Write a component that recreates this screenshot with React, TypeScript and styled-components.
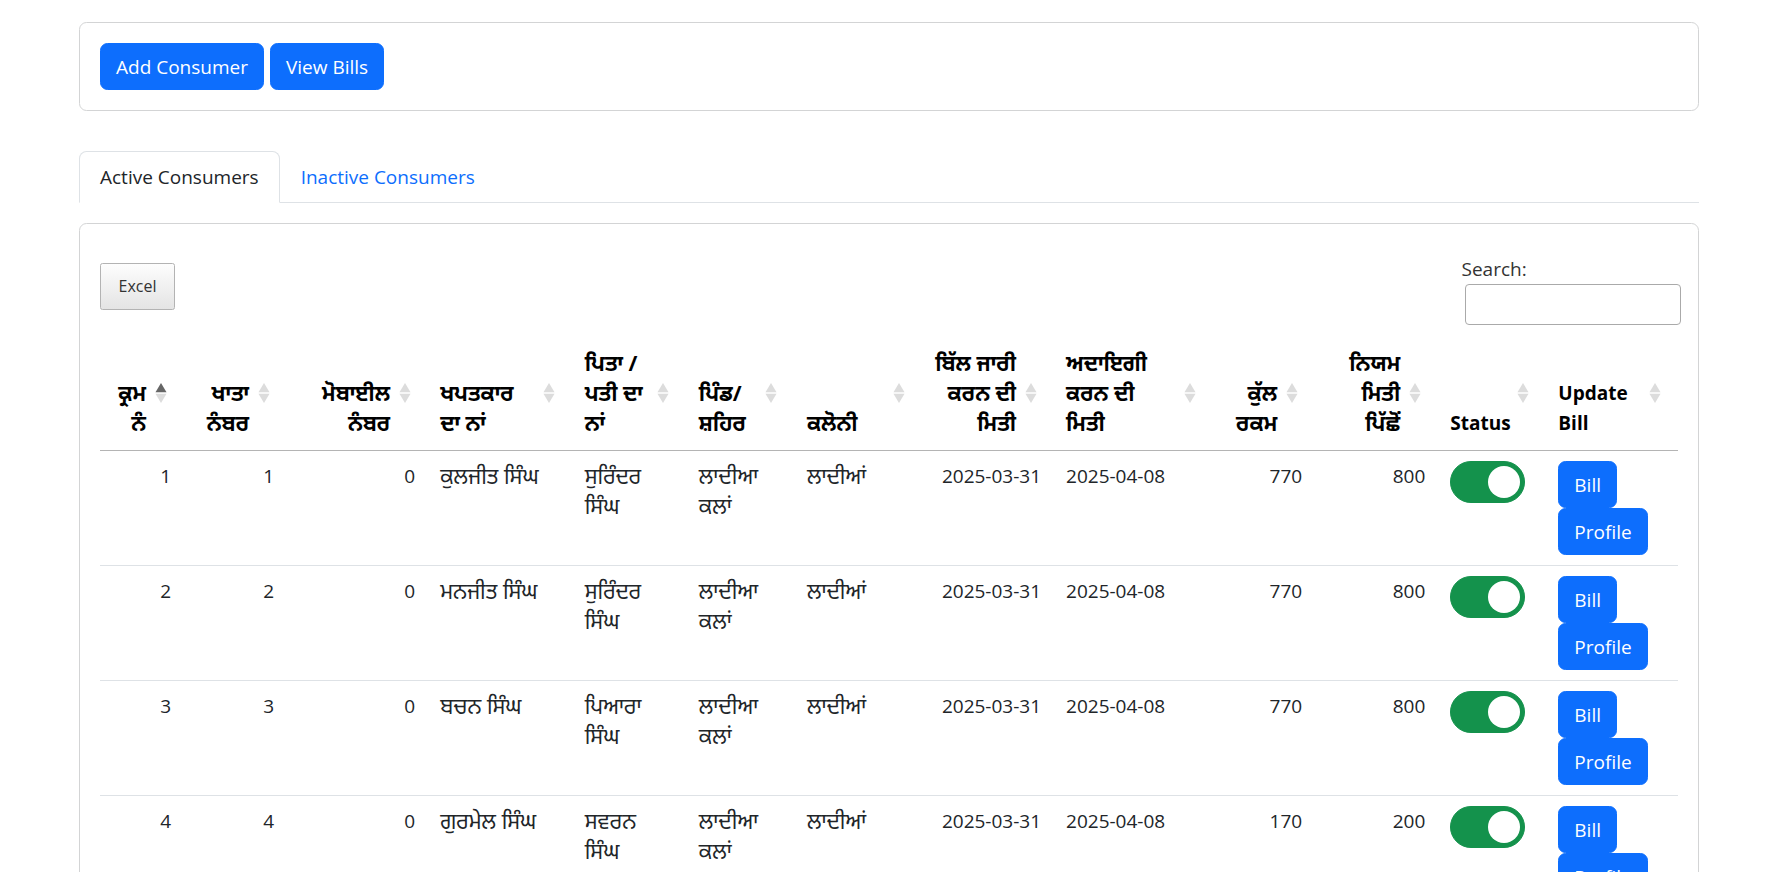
import React from 'react';
import styled, { createGlobalStyle, css } from 'styled-components';

const GlobalStyle = createGlobalStyle`
  html, body { margin: 0; padding: 0; background: #fff; overflow: hidden; }
  body {
    font-family: "Open Sans", "Noto Sans Gurmukhi", "Raavi", "Lohit Gurmukhi", "Noto Sans", sans-serif;
    font-size: 19px;
    line-height: 30px;
    color: #212529;
  }
  *, *::before, *::after { box-sizing: border-box; }
`;

const Page = styled.div`
  width: 1620px;
  margin-left: 79px;
  padding-top: 22px;
`;

const Card = styled.section`
  border: 1px solid #d3d4d5;
  border-radius: 7.5px;
  background: #fff;
`;

const CardBody = styled.div`
  padding: 20px;
`;

const Toolbar = styled.div`
  display: flex;
  gap: 6px;
`;

const PrimaryButton = styled.button`
  font-family: inherit;
  font-size: 19px;
  line-height: 30px;
  color: #fff;
  background: #0d6efd;
  border: 1px solid #0d6efd;
  border-radius: 7.5px;
  padding: 7.5px 15px;
  cursor: pointer;
  white-space: nowrap;
`;

const TabNav = styled.nav`
  display: flex;
  margin-top: 40px;
  border-bottom: 1px solid #dee2e6;
`;

const Tab = styled.button<{ $active?: boolean }>`
  font-family: inherit;
  font-size: 19px;
  line-height: 30px;
  padding: 10px 20px;
  margin-bottom: -1px;
  background: transparent;
  border: 1px solid transparent;
  border-top-left-radius: 7.5px;
  border-top-right-radius: 7.5px;
  color: #0d6efd;
  cursor: pointer;
  ${(p) =>
    p.$active &&
    css`
      color: #212529;
      background: #fff;
      border-color: #dee2e6 #dee2e6 #fff;
    `}
`;

const TableCard = styled(Card)`
  margin-top: 20px;
`;

const TopRow = styled.div`
  display: flex;
  justify-content: space-between;
  align-items: flex-end;
  padding-top: 10px;
`;

const ExcelButton = styled.button`
  font-family: "Open Sans", sans-serif;
  font-size: 16px;
  line-height: 27px;
  color: #333;
  padding: 9px 17.5px;
  margin-bottom: 15px;
  border: 1px solid #b3b3b3;
  border-radius: 2.5px;
  background: linear-gradient(to bottom, #fdfdfd 0%, #e4e4e4 100%);
  cursor: pointer;
`;

const SearchBlock = styled.label`
  display: flex;
  flex-direction: column;
  align-items: flex-start;
  margin-right: -3px;
  color: #333;
  font-size: 19px;
  line-height: 30px;
`;

const SearchInput = styled.input`
  width: 216px;
  height: 41px;
  margin-left: 3.5px;
  border: 1px solid #aaa;
  border-radius: 4px;
  padding: 6px;
  font: inherit;
  background: #fff;
`;

const Table = styled.table`
  width: 100%;
  margin-top: 10px;
  table-layout: fixed;
  border-collapse: separate;
  border-spacing: 0;
`;

type Align = 'left' | 'right';
type Lang = 'pa' | 'en';

const HeadCell = styled.th<{ $align: Align; $lang: Lang }>`
  position: relative;
  text-align: ${(p) => p.$align};
  vertical-align: bottom;
  padding: 12.5px 37.5px 12.5px 12.5px;
  font-weight: 700;
  font-size: ${(p) => (p.$lang === 'pa' ? '21.5px' : '19px')};
  line-height: 30px;
  color: #000;
  white-space: pre-line;
  border-bottom: 1px solid #b4b4b4;
`;

const SortMark = styled.svg`
  position: absolute;
  right: 17px;
  top: 50%;
  transform: translateY(-50%);
  width: 12px;
  height: 22px;
`;

const BodyCell = styled.td<{ $align: Align; $lang: Lang }>`
  text-align: ${(p) => p.$align};
  vertical-align: top;
  padding: 10px 12.5px;
  font-size: ${(p) => (p.$lang === 'pa' ? '21.5px' : '19px')};
  line-height: 30px;
  white-space: pre-line;
  border-bottom: 1px solid #dee2e6;
`;

const Switch = styled.span<{ $on: boolean }>`
  position: relative;
  display: block;
  width: 75px;
  height: 42px;
  border-radius: 21px;
  background: ${(p) => (p.$on ? '#14924c' : '#fff')};
  border: 1px solid ${(p) => (p.$on ? '#14924c' : '#bbb')};
  &::after {
    content: '';
    position: absolute;
    top: 4px;
    ${(p) => (p.$on ? 'right: 4px;' : 'left: 4px;')}
    width: 32px;
    height: 32px;
    border-radius: 50%;
    background: #fff;
  }
`;

const ActionStack = styled.div`
  display: flex;
  flex-direction: column;
  align-items: flex-start;
`;

type Column = {
  w: number;
  head: string;
  headAlign: Align;
  bodyAlign: Align;
  headLang: Lang;
  bodyLang: Lang;
  sort?: 'asc';
};

const columns: Column[] = [
  { w: 83.5, head: 'ਕ੍ਰਮ\nਨੰ', headAlign: 'right', bodyAlign: 'right', headLang: 'pa', bodyLang: 'en', sort: 'asc' },
  { w: 103, head: 'ਖਾਤਾ\nਨੰਬਰ', headAlign: 'right', bodyAlign: 'right', headLang: 'pa', bodyLang: 'en' },
  { w: 141, head: 'ਮੋਬਾਈਲ\nਨੰਬਰ', headAlign: 'right', bodyAlign: 'right', headLang: 'pa', bodyLang: 'en' },
  { w: 144.5, head: 'ਖਪਤਕਾਰ\nਦਾ ਨਾਂ', headAlign: 'left', bodyAlign: 'left', headLang: 'pa', bodyLang: 'pa' },
  { w: 114, head: 'ਪਿਤਾ /\nਪਤੀ ਦਾ\nਨਾਂ', headAlign: 'left', bodyAlign: 'left', headLang: 'pa', bodyLang: 'pa' },
  { w: 108, head: 'ਪਿੰਡ/\nਸ਼ਹਿਰ', headAlign: 'left', bodyAlign: 'left', headLang: 'pa', bodyLang: 'pa' },
  { w: 128, head: 'ਕਲੋਨੀ', headAlign: 'left', bodyAlign: 'left', headLang: 'pa', bodyLang: 'pa' },
  { w: 131, head: 'ਬਿੱਲ ਜਾਰੀ\nਕਰਨ ਦੀ\nਮਿਤੀ', headAlign: 'right', bodyAlign: 'right', headLang: 'pa', bodyLang: 'en' },
  { w: 159, head: 'ਅਦਾਇਗੀ\nਕਰਨ ਦੀ\nਮਿਤੀ', headAlign: 'left', bodyAlign: 'left', headLang: 'pa', bodyLang: 'en' },
  { w: 102, head: 'ਕੁੱਲ\nਰਕਮ', headAlign: 'right', bodyAlign: 'right', headLang: 'pa', bodyLang: 'en' },
  { w: 123, head: 'ਨਿਯਮ\nਮਿਤੀ\nਪਿੱਛੋਂ', headAlign: 'right', bodyAlign: 'right', headLang: 'pa', bodyLang: 'en' },
  { w: 108, head: 'Status', headAlign: 'left', bodyAlign: 'left', headLang: 'en', bodyLang: 'en' },
  { w: 132, head: 'Update\nBill', headAlign: 'left', bodyAlign: 'left', headLang: 'en', bodyLang: 'en' },
];

type Consumer = {
  sr: number;
  account: number;
  mobile: number;
  name: string;
  father: string;
  village: string;
  colony: string;
  issued: string;
  due: string;
  total: number;
  late: number;
  active: boolean;
};

const consumers: Consumer[] = [
  { sr: 1, account: 1, mobile: 0, name: 'ਕੁਲਜੀਤ ਸਿੰਘ', father: 'ਸੁਰਿੰਦਰ\nਸਿੰਘ', village: 'ਲਾਦੀਆ\nਕਲਾਂ', colony: 'ਲਾਦੀਆਂ', issued: '2025-03-31', due: '2025-04-08', total: 770, late: 800, active: true },
  { sr: 2, account: 2, mobile: 0, name: 'ਮਨਜੀਤ ਸਿੰਘ', father: 'ਸੁਰਿੰਦਰ\nਸਿੰਘ', village: 'ਲਾਦੀਆ\nਕਲਾਂ', colony: 'ਲਾਦੀਆਂ', issued: '2025-03-31', due: '2025-04-08', total: 770, late: 800, active: true },
  { sr: 3, account: 3, mobile: 0, name: 'ਬਚਨ ਸਿੰਘ', father: 'ਪਿਆਰਾ\nਸਿੰਘ', village: 'ਲਾਦੀਆ\nਕਲਾਂ', colony: 'ਲਾਦੀਆਂ', issued: '2025-03-31', due: '2025-04-08', total: 770, late: 800, active: true },
  { sr: 4, account: 4, mobile: 0, name: 'ਗੁਰਮੇਲ ਸਿੰਘ', father: 'ਸਵਰਨ\nਸਿੰਘ', village: 'ਲਾਦੀਆ\nਕਲਾਂ', colony: 'ਲਾਦੀਆਂ', issued: '2025-03-31', due: '2025-04-08', total: 170, late: 200, active: true },
];

const SortIcon: React.FC<{ dir?: 'asc' }> = ({ dir }) => (
  <SortMark viewBox="0 0 12 22" aria-hidden="true">
    <polygon points="6,1 11.5,10.2 0.5,10.2" fill={dir === 'asc' ? '#666' : '#dcdcdc'} />
    <polygon points="0.5,11.8 11.5,11.8 6,21" fill="#dcdcdc" />
  </SortMark>
);

export default function App() {
  return (
    <>
      <GlobalStyle />
      <Page>
        <Card>
          <CardBody>
            <Toolbar>
              <PrimaryButton>Add Consumer</PrimaryButton>
              <PrimaryButton>View Bills</PrimaryButton>
            </Toolbar>
          </CardBody>
        </Card>

        <TabNav>
          <Tab $active>Active Consumers</Tab>
          <Tab>Inactive Consumers</Tab>
        </TabNav>

        <TableCard>
          <CardBody>
            <TopRow>
              <ExcelButton>Excel</ExcelButton>
              <SearchBlock>
                Search:
                <SearchInput type="search" />
              </SearchBlock>
            </TopRow>
            <Table>
              <colgroup>
                {columns.map((c, i) => (
                  <col key={i} style={{ width: c.w }} />
                ))}
              </colgroup>
              <thead>
                <tr>
                  {columns.map((c, i) => (
                    <HeadCell key={i} $align={c.headAlign} $lang={c.headLang}>
                      {c.head}
                      <SortIcon dir={c.sort} />
                    </HeadCell>
                  ))}
                </tr>
              </thead>
              <tbody>
                {consumers.map((r) => {
                  const values: React.ReactNode[] = [
                    r.sr,
                    r.account,
                    r.mobile,
                    r.name,
                    r.father,
                    r.village,
                    r.colony,
                    r.issued,
                    r.due,
                    r.total,
                    r.late,
                    <Switch $on={r.active} />,
                    <ActionStack>
                      <PrimaryButton>Bill</PrimaryButton>
                      <PrimaryButton>Profile</PrimaryButton>
                    </ActionStack>,
                  ];
                  return (
                    <tr key={r.sr}>
                      {values.map((v, i) => (
                        <BodyCell key={i} $align={columns[i].bodyAlign} $lang={columns[i].bodyLang}>
                          {v}
                        </BodyCell>
                      ))}
                    </tr>
                  );
                })}
              </tbody>
            </Table>
          </CardBody>
        </TableCard>
      </Page>
    </>
  );
}
